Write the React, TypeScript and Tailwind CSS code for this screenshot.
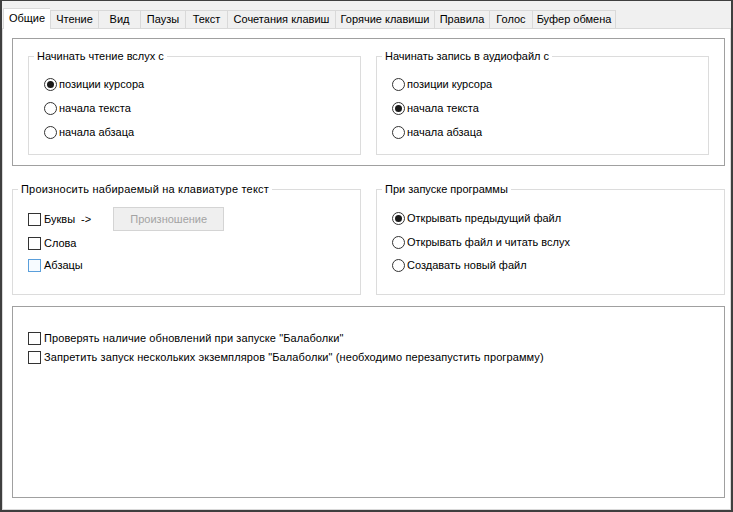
import type { ReactNode } from 'react';

const tabs = [
  { label: 'Общие', width: 'w-[47px]' },
  { label: 'Чтение', width: 'w-[48px]' },
  { label: 'Вид', width: 'w-[42px]' },
  { label: 'Паузы', width: 'w-[45px]' },
  { label: 'Текст', width: 'w-[42px]' },
  { label: 'Сочетания клавиш', width: 'w-[108px]' },
  { label: 'Горячие клавиши', width: 'w-[99px]' },
  { label: 'Правила', width: 'w-[55px]' },
  { label: 'Голос', width: 'w-[43px]' },
  { label: 'Буфер обмена', width: 'w-[84px]' },
];

function Radio({ label, checked }: { label: string; checked?: boolean }) {
  return (
    <div className="flex h-4 items-center">
      <span className="flex h-[13px] w-[13px] items-center justify-center rounded-full border border-[#333333] bg-white">
        {checked && <span className="h-[7px] w-[7px] rounded-full bg-[#1a1a1a]" />}
      </span>
      <span className="ml-[2px]">{label}</span>
    </div>
  );
}

function Check({ label, focused, wide }: { label: ReactNode; focused?: boolean; wide?: boolean }) {
  return (
    <div className="flex h-4 items-center">
      <span
        className={
          focused
            ? 'h-[13px] w-[13px] border border-[#5a9fdb] bg-[#f7fbff]'
            : 'h-[13px] w-[13px] border border-[#333333] bg-white'
        }
      />
      <span className={wide ? 'ml-[3px] tracking-[0.1px]' : 'ml-[3px]'}>{label}</span>
    </div>
  );
}

function GroupBox({
  title,
  className,
  titleClass = '',
  children,
}: {
  title: string;
  className: string;
  titleClass?: string;
  children: ReactNode;
}) {
  return (
    <fieldset className={`border border-[#dcdcdc] ${className}`}>
      <legend className={`ml-[5px] px-[3px] leading-4 ${titleClass}`}>{title}</legend>
      <div className="pl-[15px]">{children}</div>
    </fieldset>
  );
}

export default function App() {
  return (
    <div
      className="flex h-[512px] w-[733px] flex-col border-t border-r-2 border-b-2 border-l-2 border-[#3f3f3f] bg-[#f0f0f0] text-[11px] text-black"
      style={{ fontFamily: '"Liberation Sans", Arial, sans-serif' }}
    >
      {/* Tabs */}
      <div className="flex h-[27px] items-end pl-[1px]">
        {tabs.map((tab, i) => {
          const selected = i === 0;
          return (
            <div
              key={tab.label}
              className={
                selected
                  ? `relative z-10 -mb-px flex h-[21px] items-center justify-center border-t border-l border-[#d9d9d9] bg-white pb-[2px] ${tab.width}`
                  : `flex h-[18px] items-center justify-center border-t border-l border-[#d9d9d9] bg-[#f0f0f0] ${tab.width} ${i === tabs.length - 1 ? 'border-r' : ''}`
              }
            >
              {tab.label}
            </div>
          );
        })}
      </div>

      {/* Tab page */}
      <div className="flex flex-1 flex-col border border-[#d9d9d9] bg-white pt-[9px] pb-[11px] pl-[9px]">
        {/* Reading start */}
        <div className="flex w-[713px] gap-[15px] border border-[#a0a0a0] px-[15px] pt-[9px] pb-[10px]">
          <GroupBox title="Начинать чтение вслух с" className="w-[333px] pt-[12px] pb-[14px]">
            <div className="flex flex-col gap-2">
              <Radio label="позиции курсора" checked />
              <Radio label="начала текста" />
              <Radio label="начала абзаца" />
            </div>
          </GroupBox>
          <GroupBox title="Начинать запись в аудиофайл с" className="w-[333px] pt-[12px] pb-[14px]">
            <div className="flex flex-col gap-2">
              <Radio label="позиции курсора" />
              <Radio label="начала текста" checked />
              <Radio label="начала абзаца" />
            </div>
          </GroupBox>
        </div>

        {/* Middle row */}
        <div className="mt-[15px] flex w-[713px] gap-[15px]">
          <GroupBox
            title="Произносить набираемый на клавиатуре текст"
            titleClass="tracking-[0.2px]"
            className="w-[349px] pt-[10px] pb-[21px]"
          >
            <div className="flex h-6 items-center">
              <Check
                label={
                  <span>
                    Буквы <span className="ml-[3px]">-&gt;</span>
                  </span>
                }
              />
              <div className="ml-[22px] flex h-6 w-[111px] items-center justify-center border border-[#d4d4d4] bg-[#efefef] text-[#a3a3a3]">
                Произношение
              </div>
            </div>
            <div className="mt-[4px]">
              <Check label="Слова" />
            </div>
            <div className="mt-[6px]">
              <Check label="Абзацы" focused />
            </div>
          </GroupBox>
          <GroupBox title="При запуске программы" className="w-[349px] pt-[13px] pb-[21px]">
            <div className="flex flex-col">
              <Radio label="Открывать предыдущий файл" checked />
              <div className="mt-[8px]">
                <Radio label="Открывать файл и читать вслух" />
              </div>
              <div className="mt-[7px]">
                <Radio label="Создавать новый файл" />
              </div>
            </div>
          </GroupBox>
        </div>

        {/* Misc options */}
        <div className="mt-[11px] flex w-[713px] flex-1 flex-col gap-[3px] border border-[#a0a0a0] pt-[23px] pl-[15px]">
          <Check wide label='Проверять наличие обновлений при запуске "Балаболки"' />
          <Check wide label='Запретить запуск нескольких экземпляров "Балаболки" (необходимо перезапустить программу)' />
        </div>
      </div>
    </div>
  );
}
